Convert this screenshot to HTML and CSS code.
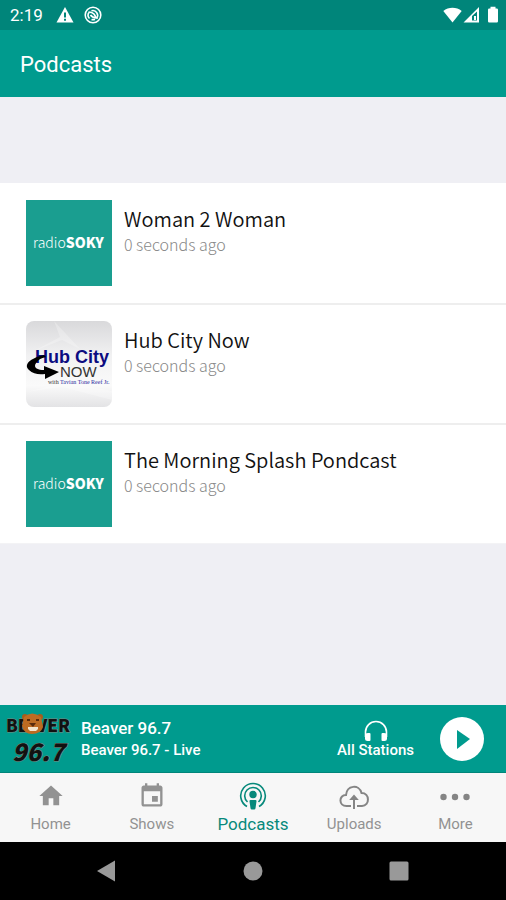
FILE: index.html
```html
<!DOCTYPE html>
<html lang="en">
<head>
  <meta charset="UTF-8">
  <meta name="viewport" content="width=device-width, initial-scale=1.0">
  <title>Podcasts</title>
  <link rel="stylesheet" href="styles.css">
</head>
<body>
  <!-- STATUS BAR -->
  <div class="status-bar">
    <span class="clock">2:19</span>
    <svg width="18" height="18" viewBox="0 0 18 18">
      <path fill="#fff" d="M9 1 L17.500 16.500 H.5 Z"/>
      <path fill="#00857a" d="M8 6.500h2v5H8zM8 12.800h2v2H8z"/>
    </svg>
    <svg width="18" height="18" viewBox="0 0 18 18" fill="none" stroke="#fff">
      <circle cx="9" cy="9" r="7.800" stroke-width="1.600"/>
      <path d="M5.500 12.500 A4.700 4.700 0 0 1 5 6.500 M7.500 4.800 A4.700 4.700 0 0 1 12.500 12.300 M7.500 13.400 A4.700 4.700 0 0 0 11 13.200" stroke-width="1.600"/>
      <path d="M4.500 6 Q8 6 10 8 L12.500 12 Q8 11.500 6.500 9" stroke-width="1.600"/>
    </svg>
    <span class="status-icons">
      <svg width="19" height="18" viewBox="0 0 19 18"><path fill="#fff" d="M9.500 16.500 L.3 5 C5.500 .8 13.500 .8 18.700 5 Z"/></svg>
      <svg width="17" height="18" viewBox="0 0 17 18">
        <path fill="#fff" fill-rule="evenodd" d="M.5 16.500 L16 1 V16.500 Z M9 10 V14.500 H14 V5.500 Z"/>
        <path fill="#fff" d="M11 10h2v4h-2z"/>
      </svg>
      <svg class="battery" width="12" height="18" viewBox="0 0 12 18"><path fill="#fff" d="M3.500 .8h5v1.700h1.300q1.200 0 1.200 1.200v11.600q0 1.200-1.200 1.200H2.200Q1 16.500 1 15.300V3.700q0-1.200 1.200-1.200h1.300z"/></svg>
    </span>
  </div>

  <header class="app-bar">
    <h1>Podcasts</h1>
  </header>

  <!-- PODCAST LIST -->
  <main class="content">
    <ul class="podcast-list">
      <li class="podcast">
        <svg class="cover" viewBox="0 0 86 86">
          <rect width="86" height="86" fill="#1a9e90"/>
          <text class="soky-light" x="7" y="48">radio<tspan class="soky-bold">SOKY</tspan></text>
        </svg>
        <div class="podcast-info">
          <h2>Woman 2 Woman</h2>
          <p>0 seconds ago</p>
        </div>
      </li>
      <li class="podcast">
        <svg class="cover rounded" viewBox="0 0 86 86">
          <defs>
            <linearGradient id="paper" x1="0" y1="0" x2="0" y2="1">
              <stop offset="0" stop-color="#d9d9db"/>
              <stop offset=".4" stop-color="#f1f1f2"/>
              <stop offset=".75" stop-color="#fafafa"/>
              <stop offset="1" stop-color="#e3e3e5"/>
            </linearGradient>
          </defs>
          <rect width="86" height="86" fill="url(#paper)"/>
          <path fill="#fff" opacity=".25" d="M28 0 L54 28 L36 19 L8 30 L34 16z M0 71 L36 66 L86 79 V70 L40 61z"/>
          <text class="hub-title" x="9" y="42">Hub City</text>
          <text class="hub-now" x="34" y="56">NOW</text>
          <text class="hub-with" x="22" y="63">with <tspan fill="#2a2aa0">Tavian Tone Reef Jr.</tspan></text>
          <path d="M18 34 C4 37 -3 44 3 49 C7 53 13 54 19 53 V58 L33 51 L18 45 V49 C9 49 7 45 11 41 C13 38 16 37 20 36z"/>
        </svg>
        <div class="podcast-info">
          <h2>Hub City Now</h2>
          <p>0 seconds ago</p>
        </div>
      </li>
      <li class="podcast">
        <svg class="cover" viewBox="0 0 86 86">
          <rect width="86" height="86" fill="#1a9e90"/>
          <text class="soky-light" x="7" y="48">radio<tspan class="soky-bold">SOKY</tspan></text>
        </svg>
        <div class="podcast-info">
          <h2>The Morning Splash Pondcast</h2>
          <p>0 seconds ago</p>
        </div>
      </li>
    </ul>
  </main>

  <!-- PLAYER -->
  <section class="player">
    <svg class="station-logo" width="66" height="54" viewBox="0 0 66 54">
      <text class="beaver-name" x="1" y="20">BE</text>
      <text class="beaver-name" x="65" y="20" text-anchor="end">VER</text>
      <text class="beaver-number" x="7" y="49">96.7</text>
      <circle cx="20" cy="5" r="3" fill="#a65c1c"/>
      <circle cx="35" cy="5" r="3" fill="#a65c1c"/>
      <path fill="#bd6b22" d="M19 5 Q27 -2 36 5 L38 15 Q36 22 27 22 Q19 22 17 14z"/>
      <path fill="#f4e4cb" d="M23 15h10v2l-2 2h-6l-2-2z"/>
      <path fill="#5a2b0b" d="M24 11h7l-3 4zM22 7h3v2h-3zM31 7h3v2h-3z"/>
    </svg>
    <div class="now-playing">
      <p class="station">Beaver 96.7</p>
      <p class="track">Beaver 96.7 - Live</p>
    </div>
    <button class="stations-btn">
      <svg width="26" height="24" viewBox="0 0 26 24">
        <path fill="none" stroke="#fff" stroke-width="1.600" d="M2.500 18 V13 A10.500 10.500 0 0 1 23.500 13 V18"/>
        <path fill="#fff" d="M5 14h1.500q1 0 1 1v6q0 1-1 1H4.500q-2.500 0-2.500-2v-4q0-2 3-2zM21 14h-1.500q-1 0-1 1v6q0 1 1 1H21.500q2.500 0 2.500-2v-4q0-2-3-2z"/>
      </svg>
      <span>All Stations</span>
    </button>
    <button class="play-btn" aria-label="Play">
      <svg width="44" height="44" viewBox="0 0 44 44"><path fill="#009b8e" d="M17 13 L30 22 L17 32z"/></svg>
    </button>
  </section>

  <!-- TABS -->
  <nav class="tabs">
    <a href="#">
      <svg width="28" height="28" viewBox="0 0 24 24"><path fill="#929292" d="M10 20v-6h4v6h5v-8h3L12 3 2 12h3v8z"/></svg>
      <span>Home</span>
    </a>
    <a href="#">
      <svg width="28" height="28" viewBox="0 0 24 24"><path fill="#929292" d="M17 12h-5v5h5v-5zM16 1v2H8V1H6v2H5c-1.110 0-1.990.9-1.990 2L3 19c0 1.100.89 2 2 2h14c1.100 0 2-.9 2-2V5c0-1.100-.9-2-2-2h-1V1h-2zm3 18H5V8h14v11z"/></svg>
      <span>Shows</span>
    </a>
    <a class="active" href="#">
      <svg width="28" height="28" viewBox="0 0 28 28">
        <g fill="none" stroke="#07897b" stroke-width="1.600">
          <path d="M8 24.500 A12.300 12.300 0 1 1 20 24.500"/>
          <path d="M8.500 20 A8.300 8.300 0 1 1 19.500 20"/>
        </g>
        <circle cx="14" cy="12.500" r="3.700" fill="#07897b"/>
        <path fill="#07897b" d="M11.500 18h5q1.200 0 1 1.200l-1 7q-.2 1.300-1.300 1.300h-2.400q-1.100 0-1.300-1.300l-1-7q-.2-1.200 1-1.200z"/>
      </svg>
      <span>Podcasts</span>
    </a>
    <a href="#">
      <svg width="30" height="28" viewBox="0 0 30 28" fill="none" stroke="#858585" stroke-width="2">
        <path d="M12 24 H7.500 C-.5 24 -.5 13 7 13 C8 3 20 2 22.500 11 C31 11 31 24 23 24 H18"/>
        <path d="M15 27V15"/>
        <path fill="#858585" stroke="none" d="M15 12.500l4.800 5.500h-9.600z"/>
      </svg>
      <span>Uploads</span>
    </a>
    <a href="#">
      <svg width="30" height="28" viewBox="0 0 30 28" fill="#858585"><circle cx="3.500" cy="15" r="3.200"/><circle cx="15" cy="15" r="3.200"/><circle cx="26.500" cy="15" r="3.200"/></svg>
      <span>More</span>
    </a>
  </nav>

  <!-- SYSTEM BUTTONS -->
  <div class="system-nav">
    <button aria-label="Back"><svg width="22" height="22" viewBox="0 0 22 22"><path fill="#999" d="M19 .5v21L1 11z"/></svg></button>
    <button aria-label="Home"><svg width="22" height="22" viewBox="0 0 22 22"><circle cx="11" cy="11" r="9.500" fill="#999"/></svg></button>
    <button aria-label="Recent apps"><svg width="22" height="22" viewBox="0 0 22 22"><rect x="1.500" y="1.500" width="19" height="19" rx="1.500" fill="#999"/></svg></button>
  </div>
</body>
</html>
```
FILE: styles.css
```css
* {
  box-sizing: border-box;
}

body {
  margin: 0;
  min-height: 100vh;
  display: flex;
  flex-direction: column;
  background: #efeff4;
  font-family: Roboto, sans-serif;
}

h1, h2, p, ul {
  margin: 0;
  padding: 0;
  font-weight: normal;
}

button {
  border: none;
  padding: 0;
  background: none;
  color: inherit;
  font-family: inherit;
  cursor: pointer;
}

svg {
  display: block;
  flex-shrink: 0;
}

/* === STATUS BAR === */
.status-bar {
  display: flex;
  align-items: center;
  gap: 10px;
  height: 30px;
  padding: 0 7px 0 10px;
  background: #00857a;
  color: #fff;
}

.clock {
  font-size: 17px;
  margin-right: 3px;
}

.status-icons {
  display: flex;
  gap: 1px;
  margin-left: auto;
}

.battery {
  margin-left: 6px;
}

/* === HEADER === */
.app-bar {
  display: flex;
  align-items: center;
  height: 67px;
  padding: 2px 20px 0;
  background: #009b8e;
  color: #fff;
}

.app-bar h1 {
  font-size: 22px;
  line-height: 28px;
}

/* === PODCAST LIST === */
.content {
  flex: 1;
  padding-top: 86px;
}

.podcast-list {
  list-style: none;
  border-bottom: 1px solid #f3f3f5;
}

.podcast {
  display: flex;
  gap: 12px;
  padding: 17px 26px;
  background: #fff;
}

.podcast + .podcast {
  border-top: 2px solid #eee;
  padding: 16px 26px;
}

.cover {
  width: 86px;
  height: 86px;
}

.rounded {
  border-radius: 8px;
}

.podcast-info {
  padding-top: 6px;
  font-family: "Noto Sans CJK SC", sans-serif;
}

.podcast-info h2 {
  font-size: 20px;
  line-height: 26px;
  font-weight: 350;
  color: #111;
}

.podcast-info p {
  font-size: 16px;
  line-height: 24px;
  font-weight: 300;
  color: #888;
}

.soky-light {
  font-family: "Noto Sans CJK SC", sans-serif;
  font-size: 14px;
  font-weight: 300;
  fill: #fff;
}

.soky-bold {
  font-weight: 900;
}

.hub-title {
  font: bold 18px "Liberation Sans", sans-serif;
  fill: #0b0b80;
}

.hub-now {
  font: 15px "Liberation Sans", sans-serif;
  fill: #333;
}

.hub-with {
  font: 6px "Liberation Serif", serif;
  fill: #333;
}

/* === PLAYER === */
.player {
  display: flex;
  align-items: center;
  height: 67px;
  padding: 0 22px 0 5px;
  background: #009b8e;
  color: #fff;
}

.beaver-name,
.beaver-number {
  font-family: "Noto Sans CJK SC", sans-serif;
  font-size: 17px;
  font-weight: 900;
  fill: #111;
  stroke: #7b8a80;
  stroke-width: 1px;
  paint-order: stroke;
}

.beaver-number {
  font-size: 24px;
  font-style: italic;
}

.now-playing {
  flex: 1;
  padding-left: 10px;
}

.station {
  font-size: 17px;
  line-height: 22px;
  font-weight: 500;
}

.track {
  font-size: 15px;
  line-height: 22px;
  font-weight: 500;
}

.stations-btn {
  display: flex;
  flex-direction: column;
  align-items: center;
  margin-right: 26px;
  font-size: 15px;
  line-height: 18px;
  font-weight: 500;
}

.stations-btn span {
  margin-top: -2px;
}

.play-btn {
  border-radius: 50%;
  background: #fff;
}

/* === TABS === */
.tabs {
  display: flex;
  height: 70px;
  border-top: 1px solid #00857a;
  background: #f7f7f7;
}

.tabs a {
  flex: 1;
  display: flex;
  flex-direction: column;
  align-items: center;
  padding-top: 9px;
  color: #929292;
  font-size: 15px;
  line-height: 20px;
  text-decoration: none;
}

.tabs span {
  margin-top: 4px;
}

.tabs .active {
  color: #07897b;
  font-size: 17px;
}

/* === SYSTEM BUTTONS === */
.system-nav {
  display: flex;
  justify-content: center;
  gap: 124px;
  height: 58px;
  background: #000;
}
```
